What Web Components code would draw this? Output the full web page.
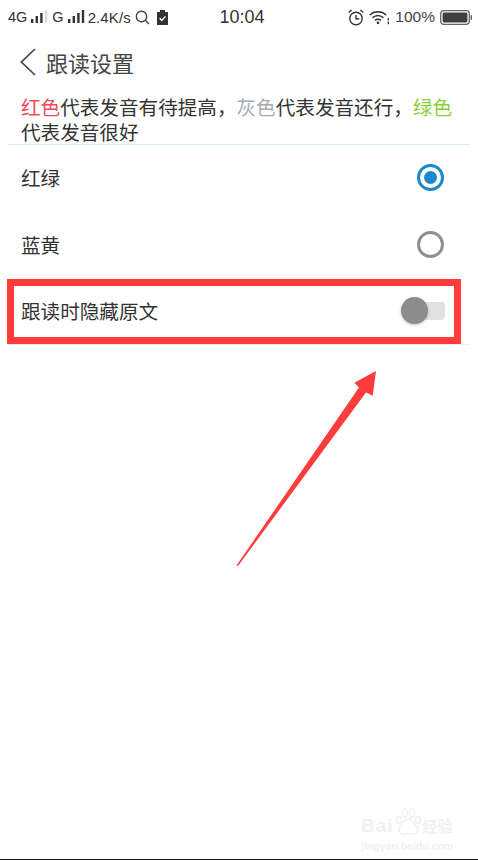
<!DOCTYPE html>
<html lang="zh">
<head>
<meta charset="utf-8">
<title>跟读设置</title>
<style>
  html, body { margin: 0; background: #fff; }
  body { font-family: "Noto Sans CJK SC", "Liberation Sans", sans-serif; color: #333; }
  .page { position: relative; width: 478px; height: 860px; overflow: hidden; display: flex; flex-direction: column; }
</style>
</head>
<body>
<div class="page">
  <status-bar></status-bar>
  <nav-header>跟读设置</nav-header>
  <hint-text></hint-text>
  <option-row divider="none">红绿<radio-mark slot="control" checked></radio-mark></option-row>
  <option-row divider="none">蓝黄<radio-mark slot="control"></radio-mark></option-row>
  <option-row>跟读时隐藏原文<switch-mark slot="control"></switch-mark></option-row>
  <red-callout></red-callout>
  <baidu-mark></baidu-mark>
  <page-edge></page-edge>
</div>

<script>
  class StatusBar extends HTMLElement {
    constructor() {
      super()
      this.attachShadow({ mode: 'open' })
    }

    bars(last) {
      return /* html */`
        <svg width="18" height="14" viewBox="0 0 18 14">
          <rect x="0" y="9" width="2.4" height="4" fill="#333"/>
          <rect x="4.6" y="6" width="2.4" height="7" fill="#333"/>
          <rect x="9.2" y="3" width="2.4" height="10" fill="#333"/>
          <rect x="13.8" y="0" width="2.4" height="13" fill="${last}"/>
        </svg>`
    }

    connectedCallback() {
      this.shadowRoot.innerHTML = /* html */`
        <style>
          :host { display: block; height: 34px; flex: none; font-family: "Liberation Sans", Roboto, sans-serif; color: #333; }
          .bar { height: 100%; display: grid; grid-template-columns: 1fr auto 1fr; align-items: center; padding: 0 0 0 8px; }
          .left, .right { display: flex; align-items: center; }
          .right { justify-content: flex-end; padding-right: 6px; }
          .net { font-size: 14.5px; }
          .speed { font-size: 15px; margin: 0 4px 0 2px; letter-spacing: .1px; }
          .time { font-size: 18px; padding: 0 2px 0 0; }
          .pct { font-size: 15.5px; margin: 0 5px; color: #444; }
          svg { display: block; }
        </style>
        <div class="bar">
          <div class="left">
            <span class="net">4G</span>
            <span style="width:4px"></span>${this.bars('#ddd')}
            <span class="net" style="margin-left:3px">G</span>
            <span style="width:4px"></span>${this.bars('#333')}
            <span class="speed">2.4K/s</span>
            <svg width="15" height="15" viewBox="0 0 15 15" fill="none" stroke="#444" stroke-width="1.4">
              <circle cx="6.5" cy="6.5" r="5.2"/><path d="M10.3 10.3 14 14"/>
            </svg>
            <svg style="margin-left:7px" width="11" height="15" viewBox="0 0 11 15">
              <path d="M0 2h3V0h5v2h3v13H0z" fill="#333"/>
              <path d="M2.7 8.2 4.8 10.4 8.4 6.4" fill="none" stroke="#fff" stroke-width="1.4"/>
            </svg>
          </div>
          <div class="time">10:04</div>
          <div class="right">
            <svg width="16" height="17" viewBox="0 0 16 17" fill="none" stroke="#333" stroke-width="1.4">
              <circle cx="8" cy="9.5" r="6.2"/><path d="M8 6v3.8h3.2M.8 3.6 3.6 1M15.2 3.6 12.4 1"/>
            </svg>
            <svg style="margin-left:5px" width="21" height="15" viewBox="0 0 21 15" fill="none" stroke="#333" stroke-width="1.4">
              <path d="M.7 5C5.5.6 12.5.6 17.3 5M3.4 7.8c3.5-3 7.7-3 11.2 0M6 10.4c2-1.6 4-1.6 6 0"/>
              <circle cx="9" cy="12.8" r="1.4" fill="#333" stroke="none"/>
              <path d="M19.3 8v2.6M19.3 11.6v2.6" stroke-width="1.3"/>
            </svg>
            <span class="pct">100%</span>
            <svg width="32" height="15" viewBox="0 0 32 15">
              <rect x=".7" y=".7" width="28.6" height="13.6" rx="3" fill="none" stroke="#666" stroke-width="1.3"/>
              <rect x="2.6" y="2.6" width="24.8" height="9.8" rx="1.4" fill="#3c3f3a"/>
              <path d="M30.6 5h.4a1 1 0 0 1 1 1v3a1 1 0 0 1-1 1h-.4z" fill="#666"/>
            </svg>
          </div>
        </div>
      `
    }
  }

  class NavHeader extends HTMLElement {
    constructor() {
      super()
      this.attachShadow({ mode: 'open' })
    }

    connectedCallback() {
      this.shadowRoot.innerHTML = /* html */`
        <style>
          :host { display: block; height: 56px; flex: none; }
          .nav { height: 100%; display: flex; align-items: center; padding-left: 20px; gap: 10px; }
          .title { font-size: 22px; color: #444; font-weight: 400; }
          svg { display: block; }
        </style>
        <div class="nav">
          <svg width="16" height="28" viewBox="0 0 16 28" fill="none" stroke="#444" stroke-width="1.7">
            <path d="M15 1 1.4 14 15 27"/>
          </svg>
          <span class="title"><slot></slot></span>
        </div>
      `
    }
  }

  class HintText extends HTMLElement {
    constructor() {
      super()
      this.attachShadow({ mode: 'open' })
    }

    connectedCallback() {
      this.shadowRoot.innerHTML = /* html */`
        <style>
          :host { display: block; flex: none; margin: 0 8px; height: 54px; border-bottom: 1px solid #d9ecf2; }
          p { margin: 0; padding: 4px 0 0 13px; font-size: 19.6px; line-height: 25px; color: #333; width: 440px; }
          .red { color: #ea4a5a; }
          .gray { color: #a5abb0; }
          .green { color: #8ccf3a; }
        </style>
        <p><span class="red">红色</span>代表发音有待提高，<span class="gray">灰色</span>代表发音还行，<span class="green">绿色</span>代表发音很好</p>
      `
    }
  }

  class OptionRow extends HTMLElement {
    constructor() {
      super()
      this.attachShadow({ mode: 'open' })
    }

    connectedCallback() {
      const line = this.getAttribute('divider') === 'none' ? 'transparent' : '#eeeeea'
      this.shadowRoot.innerHTML = /* html */`
        <style>
          :host { display: block; flex: none; margin: 0 8px; height: 66.5px; box-sizing: content-box; }
          .row { height: 100%; box-sizing: border-box; display: flex; align-items: center; justify-content: space-between; padding: 0 26px 0 13px; border-bottom: 1px solid ${line}; font-size: 19.6px; color: #333; }
        </style>
        <div class="row"><span><slot></slot></span><slot name="control"></slot></div>
      `
    }
  }

  class RadioMark extends HTMLElement {
    constructor() {
      super()
      this.attachShadow({ mode: 'open' })
    }

    connectedCallback() {
      const on = this.hasAttribute('checked')
      this.shadowRoot.innerHTML = /* html */`
        <style>
          :host { display: block; width: 27px; height: 27px; }
          .ring { width: 100%; height: 100%; box-sizing: border-box; border-radius: 50%; border: 3px solid ${on ? '#1e88cf' : '#8f8f8f'}; display: flex; align-items: center; justify-content: center; }
          .dot { width: 13px; height: 13px; border-radius: 50%; background: #1e88cf; }
        </style>
        <div class="ring">${on ? '<div class="dot"></div>' : ''}</div>
      `
    }
  }

  class SwitchMark extends HTMLElement {
    constructor() {
      super()
      this.attachShadow({ mode: 'open' })
    }

    connectedCallback() {
      this.shadowRoot.innerHTML = /* html */`
        <style>
          :host { display: block; width: 44px; height: 27px; margin-right: -0.5px; }
          .track { width: 100%; height: 100%; display: flex; align-items: center; background: linear-gradient(#e0e2e0, #e0e2e0) no-repeat 13px center / 31px 18px; border-radius: 9px; }
          .knob { width: 27px; height: 27px; border-radius: 50%; background: #8c8c8c; box-shadow: 0 1px 3px rgba(0,0,0,.25); }
          .cap { margin-left: -10px; }
        </style>
        <div class="track"><div class="knob"></div></div>
      `
    }
  }

  // annotation drawn over the screenshot
  class RedCallout extends HTMLElement {
    constructor() {
      super()
      this.attachShadow({ mode: 'open' })
    }

    connectedCallback() {
      this.shadowRoot.innerHTML = /* html */`
        <style>
          :host { display: block; position: absolute; left: 0; top: 0; width: 478px; height: 600px; pointer-events: none; }
          .box { position: absolute; left: 7px; top: 279px; width: 454px; height: 65px; box-sizing: border-box; border: 7px solid #ff3b3b; }
          svg { position: absolute; left: 0; top: 0; }
        </style>
        <div class="box"></div>
        <svg width="478" height="600" viewBox="0 0 478 600">
          <path d="M236.5 565.5 359 387.5 354.3 382.7 376 371 372.7 395.7 366 392.5 238 566z" fill="#ff3b3b"/>
        </svg>
      `
    }
  }

  class BaiduMark extends HTMLElement {
    constructor() {
      super()
      this.attachShadow({ mode: 'open' })
    }

    connectedCallback() {
      this.shadowRoot.innerHTML = /* html */`
        <style>
          :host { display: block; position: absolute; left: 361px; top: 805px; width: 92px; color: #f1f1f1; font-family: "Liberation Sans", sans-serif; font-weight: 700; }
          .top { display: flex; align-items: flex-end; height: 32px; }
          .bai { font-size: 19px; line-height: 22px; letter-spacing: 1px; }
          svg { display: block; margin: 0 1px; }
          .jy { font-family: "Noto Sans CJK SC", sans-serif; font-size: 15px; line-height: 22px; }
          .url { font-size: 10.5px; line-height: 14px; margin-top: 2px; white-space: nowrap; }
        </style>
        <div class="top">
          <span class="bai">Bai</span>
          <svg width="27" height="30" viewBox="0 0 27 30" fill="none" stroke="#f1f1f1" stroke-width="1.5">
            <ellipse cx="4" cy="13" rx="2.6" ry="3.4"/>
            <ellipse cx="10" cy="6" rx="2.6" ry="4"/>
            <ellipse cx="17" cy="6" rx="2.6" ry="4"/>
            <ellipse cx="23" cy="13" rx="2.6" ry="3.4"/>
            <path d="M13.5 12c-4 0-5 4-8 7-3 4 0 9 4 8 3-.7 5.500-.7 8 0 4 1 7-4 4-8-3-3-4-7-8-7z"/>
          </svg>
          <span class="jy">经验</span>
        </div>
        <div class="url">jingyan.baidu.com</div>
      `
    }
  }

  class PageEdge extends HTMLElement {
    constructor() {
      super()
      this.attachShadow({ mode: 'open' })
    }

    connectedCallback() {
      this.shadowRoot.innerHTML = /* html */`
        <style>
          :host { display: block; margin-top: auto; height: 1px; background: #111; flex: none; }
        </style>
      `
    }
  }

  customElements.define('status-bar', StatusBar)
  customElements.define('nav-header', NavHeader)
  customElements.define('hint-text', HintText)
  customElements.define('option-row', OptionRow)
  customElements.define('radio-mark', RadioMark)
  customElements.define('switch-mark', SwitchMark)
  customElements.define('red-callout', RedCallout)
  customElements.define('baidu-mark', BaiduMark)
  customElements.define('page-edge', PageEdge)
</script>
</body>
</html>
